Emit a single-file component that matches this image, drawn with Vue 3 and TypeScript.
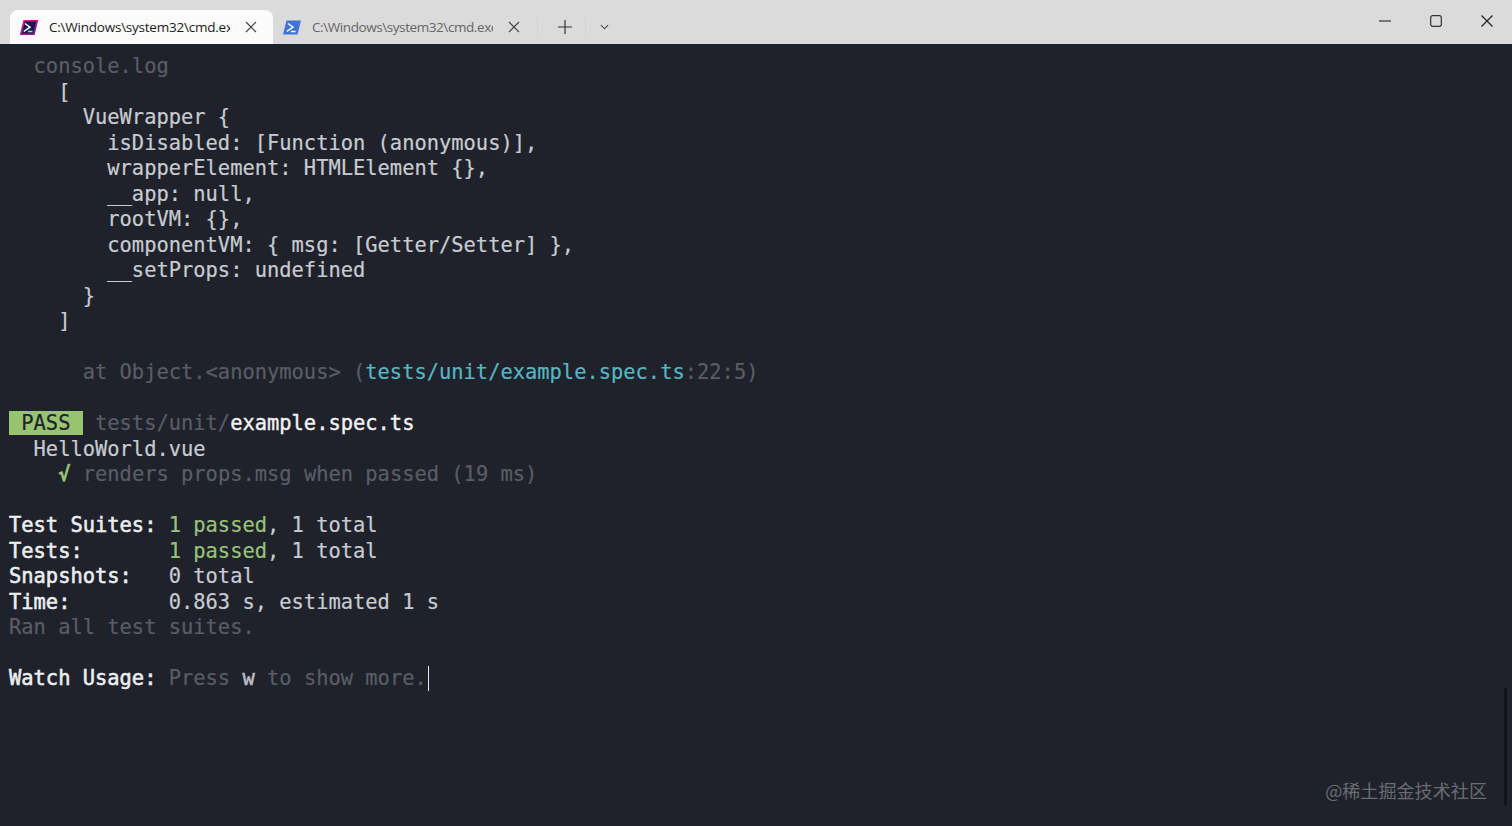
<script setup lang="ts">
type Seg = { t: string; c?: string };
const lines: Seg[][] = [
  [{ t: '  console.log', c: 'dim' }],
  [{ t: '    [' }],
  [{ t: '      VueWrapper {' }],
  [{ t: '        isDisabled: [Function (anonymous)],' }],
  [{ t: '        wrapperElement: HTMLElement {},' }],
  [{ t: '        __app: null,' }],
  [{ t: '        rootVM: {},' }],
  [{ t: '        componentVM: { msg: [Getter/Setter] },' }],
  [{ t: '        __setProps: undefined' }],
  [{ t: '      }' }],
  [{ t: '    ]' }],
  [],
  [
    { t: '      at Object.<anonymous> (', c: 'dim' },
    { t: 'tests/unit/example.spec.ts', c: 'cyan' },
    { t: ':22:5)', c: 'dim' },
  ],
  [],
  [
    { t: ' PASS ', c: 'pass' },
    { t: ' tests/unit/', c: 'dim' },
    { t: 'example.spec.ts', c: 'bright' },
  ],
  [{ t: '  HelloWorld.vue' }],
  [{ t: '    ' }, { t: '√', c: 'green check' }, { t: ' renders props.msg when passed (19 ms)', c: 'dim' }],
  [],
  [{ t: 'Test Suites: ', c: 'bold' }, { t: '1 passed', c: 'green' }, { t: ', 1 total' }],
  [{ t: 'Tests:       ', c: 'bold' }, { t: '1 passed', c: 'green' }, { t: ', 1 total' }],
  [{ t: 'Snapshots:   ', c: 'bold' }, { t: '0 total' }],
  [{ t: 'Time:        ', c: 'bold' }, { t: '0.863 s, estimated 1 s' }],
  [{ t: 'Ran all test suites.', c: 'dim' }],
  [],
  [
    { t: 'Watch Usage: ', c: 'bold' },
    { t: 'Press ', c: 'dim' },
    { t: 'w', c: 'midbold' },
    { t: ' to show more.', c: 'dim' },
    { t: '', c: 'cursor' },
  ],
];
</script>

<template>
  <div class="window">
    <header class="titlebar">
      <div class="tab active">
        <svg class="tabicon" viewBox="0 0 18 15" width="18" height="15">
          <defs>
            <linearGradient id="pg" x1="0" y1="0" x2="1" y2="1">
              <stop offset="0" stop-color="#e0218a" />
              <stop offset="1" stop-color="#7a1f9c" />
            </linearGradient>
          </defs>
          <path d="M4 .8H17.2L14 14.2H.8Z" fill="#1d1a52" stroke="url(#pg)" stroke-width="1.6" />
          <path d="M5 3.5 10 7.2 3.8 11.5" fill="none" stroke="#fff" stroke-width="1.5" />
          <path d="M8 11.5H12.5" stroke="#7fe0ff" stroke-width="1.5" />
        </svg>
        <span class="tabtitle">C:\Windows\system32\cmd.exe</span>
        <svg class="tabclose" viewBox="0 0 12 12" width="12" height="12">
          <path d="M1 1 11 11M11 1 1 11" stroke="#444" stroke-width="1.1" fill="none" />
        </svg>
      </div>
      <div class="tab inactive">
        <svg class="tabicon" viewBox="0 0 18 15" width="18" height="15">
          <path d="M3.5 .5H18L14.5 14.5H0Z" fill="#3f74d6" />
          <path d="M5 3.5 10 7.2 3.8 11.5" fill="none" stroke="#fff" stroke-width="1.5" />
          <path d="M8 11.5H12.5" stroke="#fff" stroke-width="1.5" />
        </svg>
        <span class="tabtitle">C:\Windows\system32\cmd.exe</span>
        <svg class="tabclose" viewBox="0 0 12 12" width="12" height="12">
          <path d="M1 1 11 11M11 1 1 11" stroke="#444" stroke-width="1.1" fill="none" />
        </svg>
      </div>
      <div class="sep"></div>
      <div class="newtab">
        <svg viewBox="0 0 14 14" width="14" height="14">
          <path d="M7 0V14M0 7H14" stroke="#333" stroke-width="1.2" />
        </svg>
      </div>
      <div class="sep"></div>
      <div class="drop">
        <svg viewBox="0 0 10 6" width="9" height="6">
          <path d="M1 1 5 5 9 1" stroke="#444" stroke-width="1.2" fill="none" />
        </svg>
      </div>
      <div class="spacer"></div>
      <div class="controls">
        <div class="ctl">
          <svg viewBox="0 0 12 2" width="12" height="2"><path d="M0 1H12" stroke="#333" stroke-width="1.2" /></svg>
        </div>
        <div class="ctl">
          <svg viewBox="0 0 12 12" width="12" height="12">
            <rect x="0.7" y="0.7" width="10.6" height="10.6" rx="2" fill="none" stroke="#333" stroke-width="1.2" />
          </svg>
        </div>
        <div class="ctl">
          <svg viewBox="0 0 12 12" width="12" height="12"><path d="M0.5 0.5 11.5 11.5M11.5 0.5 0.5 11.5" stroke="#222" stroke-width="1.2" /></svg>
        </div>
      </div>
    </header>
    <main class="term">
      <div v-for="(line, i) in lines" :key="i" class="line">
        <span v-for="(seg, j) in line" :key="j" :class="seg.c">{{ seg.t }}</span>
      </div>
      <div class="scrollthumb"></div>
      <div class="mark">@稀土掘金技术社区</div>
    </main>
  </div>
</template>

<style>
html,
body {
  margin: 0;
  overflow: hidden;
}
</style>

<style scoped>
.window {
  width: 1512px;
  height: 826px;
  display: flex;
  flex-direction: column;
  overflow: hidden;
}
.titlebar {
  height: 44px;
  flex: none;
  background: #dbdbdb;
  display: flex;
  align-items: flex-end;
  padding-left: 10px;
  box-sizing: border-box;
  font-family: "Open Sans", "Liberation Sans", sans-serif;
}
.tab {
  height: 34px;
  display: flex;
  align-items: center;
  box-sizing: border-box;
  border-radius: 8px 8px 0 0;
  font-size: 13.5px;
}
.tab.active {
  width: 263px;
  background: #fbfbfb;
  color: #1c1c1c;
  padding-left: 10px;
  letter-spacing: -0.23px;
}
.tab.inactive {
  width: 251px;
  color: #666;
  padding-left: 10px;
  letter-spacing: -0.42px;
}
.tabicon {
  flex: none;
}
.tabtitle {
  margin-left: 11px;
  width: 181px;
  white-space: nowrap;
  overflow: hidden;
  flex: none;
}
.tabclose {
  margin-left: 15px;
  flex: none;
}
.sep {
  width: 1px;
  height: 20px;
  background: #d2d2d2;
  align-self: center;
  margin-top: 10px;
}
.tab.inactive + .sep {
  margin-left: 13px;
}
.newtab {
  width: 47px;
  height: 34px;
  box-sizing: border-box;
  padding-left: 7px;
  display: flex;
  align-items: center;
  justify-content: center;
}
.drop {
  width: 36px;
  height: 34px;
  display: flex;
  align-items: center;
  justify-content: center;
}
.spacer {
  flex: 1;
}
.controls {
  display: flex;
  align-self: flex-start;
  height: 42px;
}
.ctl {
  width: 51px;
  height: 42px;
  display: flex;
  align-items: center;
  justify-content: center;
}
.term {
  flex: 1;
  position: relative;
  background: #1f222b;
  padding: 10px 0 0 9px;
  box-sizing: border-box;
  color: #c8cbd1;
  font-family: "DejaVu Sans Mono", "Liberation Mono", monospace;
  font-size: 20.42px;
  line-height: 25.5px;
  -webkit-text-stroke: 0.2px currentColor;
}
.line {
  height: 25.5px;
  white-space: pre;
}
.dim {
  color: #5a5d65;
}
.cyan {
  color: #56b6c2;
}
.green {
  color: #98c379;
}
.check {
  font-weight: 700;
}
.bright {
  color: #f2f2f2;
  -webkit-text-stroke: 0.4px currentColor;
}
.bold {
  color: #eceef0;
  -webkit-text-stroke: 0.55px currentColor;
}
.midbold {
  color: #b9bcc2;
  -webkit-text-stroke: 0.6px currentColor;
}
.pass {
  background: #98c46f;
  color: #1f222b;
  display: inline-block;
  height: 24px;
  line-height: 24px;
  vertical-align: top;
}
.cursor {
  display: inline-block;
  width: 1px;
  height: 25px;
  margin-left: 1px;
  background: #e8e8e8;
  vertical-align: top;
}
.scrollthumb {
  position: absolute;
  right: 5px;
  top: 644px;
  width: 3px;
  height: 118px;
  background: #121419;
}
.mark {
  position: absolute;
  right: 25px;
  top: 734px;
  font-family: "Noto Sans CJK SC", sans-serif;
  font-size: 18.1px;
  line-height: 24px;
  color: #6a6c72;
  -webkit-text-stroke: 0;
}
</style>
